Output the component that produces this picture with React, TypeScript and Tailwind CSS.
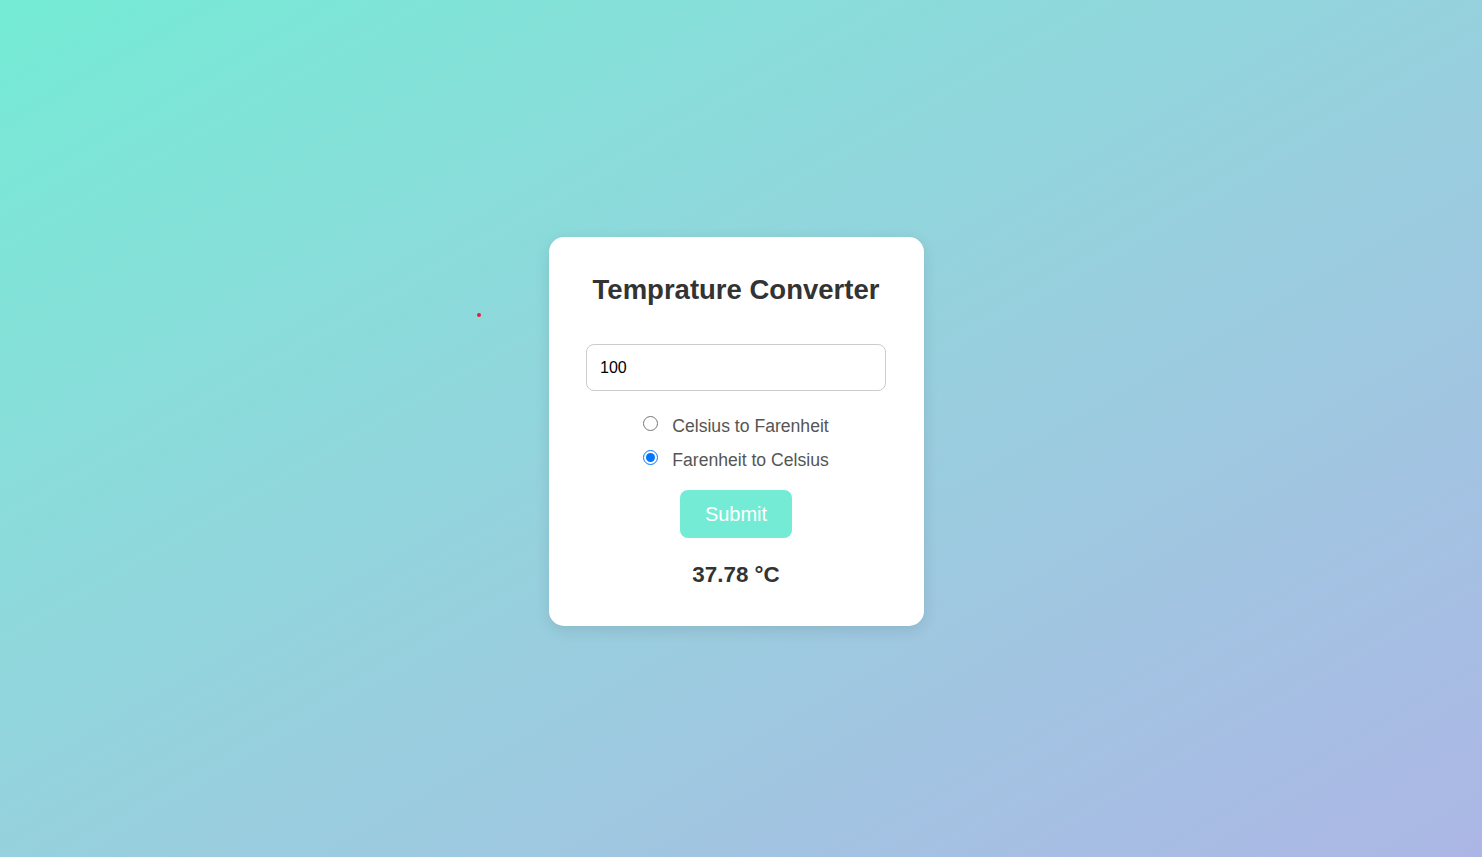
import React from "react";

export default function App() {
  return (
    <div
      className="relative w-full h-[857px] flex items-center justify-center bg-gradient-to-br from-[#74ebd5] to-[#acb6e5]"
      style={{ fontFamily: '"Liberation Sans", Arial, sans-serif' }}
    >
      <div className="absolute left-[477px] top-[313px] w-[4px] h-[4px] rounded-full bg-[#e0203a]" />
      <div className="w-[375px] mr-[10px] mt-[6px] bg-white rounded-[15px] shadow-[0_4px_15px_rgba(0,0,0,0.1)] pt-[36px] pb-[38px] flex flex-col items-center">
        <h1 className="text-[27.5px] leading-[34px] font-bold text-[#333]">Temprature Converter</h1>
        <input
          type="text"
          defaultValue="100"
          className="mt-[37px] w-[300px] h-[47px] border border-[#ccc] rounded-[8px] px-[13px] text-[16px] text-black outline-none"
        />
        <div className="mt-[18px] flex flex-col">
          <label className="h-[34px] flex items-center text-[17.6px] text-[#555]">
            <input type="radio" name="conv" className="w-[15px] h-[15px] m-0 mr-[14px] -mt-[5px]" />
            Celsius to Farenheit
          </label>
          <label className="h-[34px] flex items-center text-[17.6px] text-[#555]">
            <input type="radio" name="conv" defaultChecked className="w-[15px] h-[15px] m-0 mr-[14px] -mt-[5px]" />
            Farenheit to Celsius
          </label>
        </div>
        <button className="mt-[13px] w-[112px] h-[48px] rounded-[8px] bg-[#74ebd5] text-white text-[20px]">
          Submit
        </button>
        <div className="mt-[24px] text-[22.4px] leading-[26px] font-bold text-[#333]">37.78 °C</div>
      </div>
    </div>
  );
}
